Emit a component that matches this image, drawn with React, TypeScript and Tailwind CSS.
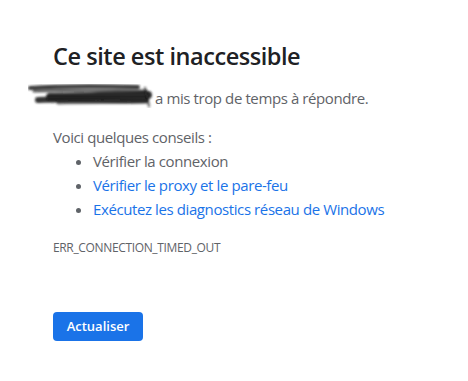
import React from "react";

export default function App() {
  return (
    <div
      className="w-[468px] h-[381px] bg-white overflow-hidden pl-[53px] pt-[41px]"
      style={{ fontFamily: '"Open Sans", "Noto Sans", sans-serif' }}
    >
      <h1 className="text-[23.5px] leading-[30px] font-semibold text-[#202124] tracking-[-0.45px]">
        Ce site est inaccessible
      </h1>
      <div className="relative mt-[15px] text-[15px] leading-[24px] text-[#5f6368] tracking-[-0.4px]">
        <div className="absolute left-[-25px] top-[-3px]">
          <svg width="128" height="26" viewBox="0 0 128 26">
            <defs>
              <filter id="blur">
                <feGaussianBlur stdDeviation="0.9" />
              </filter>
            </defs>
            <g filter="url(#blur)" stroke="#1a1a1a" strokeLinecap="round" fill="none">
              <path d="M2 5 C 30 3, 70 3, 110 4" strokeWidth="4" opacity="0.85" />
              <path d="M6 8 C 40 7, 80 7, 118 8" strokeWidth="3" opacity="0.7" />
              <path d="M22 14 C 50 13, 90 13, 120 12" strokeWidth="8" opacity="0.92" />
              <path d="M10 17 C 40 16, 80 17, 118 17" strokeWidth="6" opacity="0.88" />
              <path d="M30 20 C 60 19, 90 20, 118 19" strokeWidth="3" opacity="0.6" />
              <path d="M117 5 L 121 23" strokeWidth="2.5" opacity="0.6" />
            </g>
          </svg>
        </div>
        <p className="pl-[102px]">a mis trop de temps à répondre.</p>
      </div>
      <div className="mt-[15px] text-[15px] leading-[24px] text-[#5f6368] tracking-[-0.4px]">
        <p>Voici quelques conseils :</p>
        <ul className="list-disc pl-[40px] marker:text-[#5f6368]">
          <li>Vérifier la connexion</li>
          <li className="text-[#1a73e8]">Vérifier le proxy et le pare-feu</li>
          <li className="text-[#1a73e8]">Exécutez les diagnostics réseau de Windows</li>
        </ul>
      </div>
      <div className="mt-[19px] text-[12px] leading-[16px] text-[#5f6368] tracking-[-0.35px]">
        ERR_CONNECTION_TIMED_OUT
      </div>
      <button className="mt-[56px] w-[90px] h-[29px] rounded-[4px] bg-[#1a73e8] text-white text-[13px] font-semibold">
        Actualiser
      </button>
    </div>
  );
}
